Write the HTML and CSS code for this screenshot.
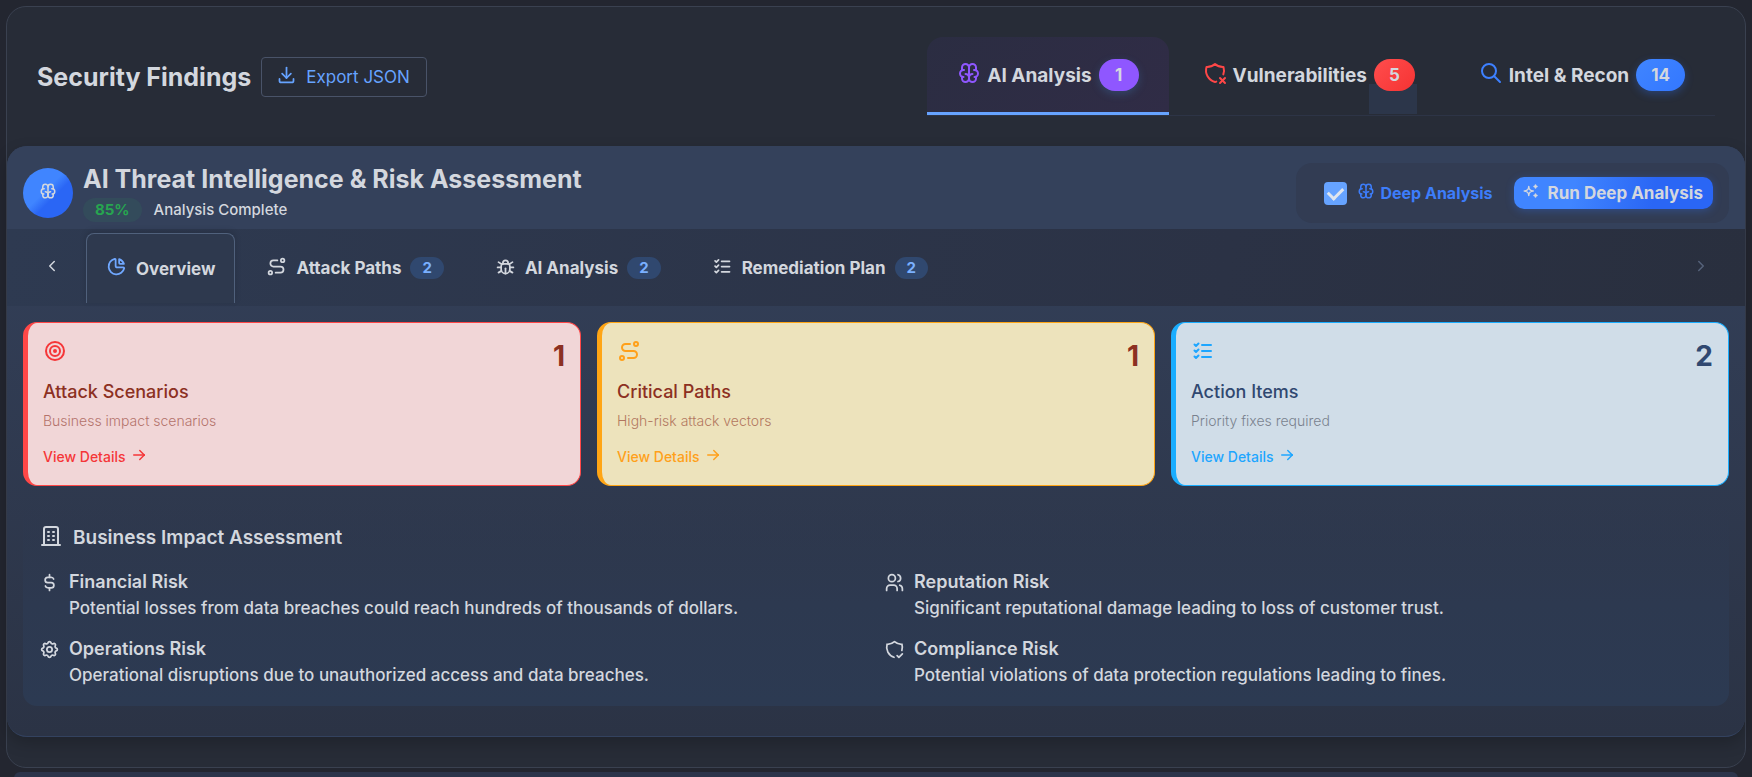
FILE: index.html
```html
<!DOCTYPE html>
<html lang="en">
<head>
    <meta charset="UTF-8">
    <meta name="viewport" content="width=device-width, initial-scale=1.0">
    <title>Security Findings</title>
    <link rel="stylesheet" href="styles.css">
</head>
<body>

<!-- Icon set -->
<svg class="icon-set" aria-hidden="true">
    <symbol id="brain" viewBox="0 0 24 24">
        <path d="M15.5 13a3.5 3.5 0 0 0 -3.5 3.5v1a3.5 3.5 0 0 0 7 0v-1.8"/>
        <path d="M8.5 13a3.5 3.5 0 0 1 3.5 3.5v1a3.5 3.5 0 0 1 -7 0v-1.8"/>
        <path d="M17.5 16a3.5 3.5 0 0 0 0 -7h-.5"/>
        <path d="M19 9.3v-2.8a3.5 3.5 0 0 0 -7 0"/>
        <path d="M6.5 16a3.5 3.5 0 0 1 0 -7h.5"/>
        <path d="M5 9.3v-2.8a3.5 3.5 0 0 1 7 0v10"/>
    </symbol>
    <symbol id="download" viewBox="0 0 24 24">
        <path d="M4 17v2a2 2 0 0 0 2 2h12a2 2 0 0 0 2 -2v-2"/>
        <path d="M7 11l5 5l5 -5"/>
        <path d="M12 4v12"/>
    </symbol>
    <symbol id="shield-x" viewBox="0 0 24 24">
        <path d="M13.252 20.601c-.408 .155 -.826 .288 -1.252 .399a12 12 0 0 1 -8.5 -15a12 12 0 0 0 8.5 -3a12 12 0 0 0 8.5 3a12 12 0 0 1 -.19 7.357"/>
        <path d="M22 22l-5 -5"/>
        <path d="M17 22l5 -5"/>
    </symbol>
    <symbol id="shield-check" viewBox="0 0 24 24">
        <path d="M11.46 20.846a12 12 0 0 1 -7.96 -14.846a12 12 0 0 0 8.5 -3a12 12 0 0 0 8.5 3a12 12 0 0 1 -.09 7.06"/>
        <path d="M15 19l2 2l4 -4"/>
    </symbol>
    <symbol id="search" viewBox="0 0 24 24">
        <circle cx="10" cy="10" r="7"/>
        <path d="M21 21l-6 -6"/>
    </symbol>
    <symbol id="sparkles" viewBox="0 0 24 24">
        <path d="M16 18a2 2 0 0 1 2 2a2 2 0 0 1 2 -2a2 2 0 0 1 -2 -2a2 2 0 0 1 -2 2z"/>
        <path d="M16 6a2 2 0 0 1 2 2a2 2 0 0 1 2 -2a2 2 0 0 1 -2 -2a2 2 0 0 1 -2 2z"/>
        <path d="M9 18a6 6 0 0 1 6 -6a6 6 0 0 1 -6 -6a6 6 0 0 1 -6 6a6 6 0 0 1 6 6z"/>
    </symbol>
    <symbol id="chevron-left" viewBox="0 0 24 24">
        <path d="M15 6l-6 6l6 6"/>
    </symbol>
    <symbol id="chevron-right" viewBox="0 0 24 24">
        <path d="M9 6l6 6l-6 6"/>
    </symbol>
    <symbol id="chart-pie" viewBox="0 0 24 24">
        <path d="M10 3.2a9 9 0 1 0 10.8 10.8a1 1 0 0 0 -1 -1h-6.8a2 2 0 0 1 -2 -2v-7a.9 .9 0 0 0 -1 -.8"/>
        <path d="M15 3.5a9 9 0 0 1 5.5 5.5h-4.5a1 1 0 0 1 -1 -1v-4.5"/>
    </symbol>
    <symbol id="route" viewBox="0 0 24 24">
        <circle cx="5" cy="19" r="2"/>
        <circle cx="19" cy="5" r="2"/>
        <path d="M11 19h5.5a3.5 3.5 0 0 0 0 -7h-8a3.5 3.5 0 0 1 0 -7h4.5"/>
    </symbol>
    <symbol id="bug" viewBox="0 0 24 24">
        <path d="M9 9v-1a3 3 0 0 1 6 0v1"/>
        <path d="M8 9h8a6 6 0 0 1 1 3v3a5 5 0 0 1 -10 0v-3a6 6 0 0 1 1 -3"/>
        <path d="M3 13h4"/>
        <path d="M17 13h4"/>
        <path d="M12 20v-6"/>
        <path d="M4 19l3.35 -2"/>
        <path d="M20 19l-3.35 -2"/>
        <path d="M4 7l3.75 2.4"/>
        <path d="M20 7l-3.75 2.4"/>
    </symbol>
    <symbol id="list-check" viewBox="0 0 24 24">
        <path d="M3.5 5.5l1.5 1.5l2.5 -2.5"/>
        <path d="M3.5 11.5l1.5 1.5l2.5 -2.5"/>
        <path d="M3.5 17.5l1.5 1.5l2.5 -2.5"/>
        <path d="M11 6h9"/>
        <path d="M11 12h9"/>
        <path d="M11 18h9"/>
    </symbol>
    <symbol id="target" viewBox="0 0 24 24">
        <circle cx="12" cy="12" r="1"/>
        <circle cx="12" cy="12" r="5"/>
        <circle cx="12" cy="12" r="9"/>
    </symbol>
    <symbol id="arrow-right" viewBox="0 0 24 24">
        <path d="M5 12h14"/>
        <path d="M13 18l6 -6"/>
        <path d="M13 6l6 6"/>
    </symbol>
    <symbol id="building" viewBox="0 0 24 24">
        <path d="M3 21h18"/>
        <path d="M5 21v-16a2 2 0 0 1 2 -2h10a2 2 0 0 1 2 2v16"/>
        <path d="M9 8h1"/>
        <path d="M9 12h1"/>
        <path d="M9 16h1"/>
        <path d="M14 8h1"/>
        <path d="M14 12h1"/>
        <path d="M14 16h1"/>
    </symbol>
    <symbol id="dollar" viewBox="0 0 24 24">
        <path d="M16.7 8a3 3 0 0 0 -2.7 -2h-4a3 3 0 0 0 0 6h4a3 3 0 0 1 0 6h-4a3 3 0 0 1 -2.7 -2"/>
        <path d="M12 3v3m0 12v3"/>
    </symbol>
    <symbol id="users" viewBox="0 0 24 24">
        <circle cx="9" cy="7" r="4"/>
        <path d="M3 21v-2a4 4 0 0 1 4 -4h4a4 4 0 0 1 4 4v2"/>
        <path d="M16 3.13a4 4 0 0 1 0 7.75"/>
        <path d="M21 21v-2a4 4 0 0 0 -3 -3.85"/>
    </symbol>
    <symbol id="settings" viewBox="0 0 24 24">
        <path d="M10.325 4.317c.426 -1.756 2.924 -1.756 3.35 0a1.724 1.724 0 0 0 2.573 1.066c1.543 -.94 3.31 .826 2.37 2.37a1.724 1.724 0 0 0 1.065 2.572c1.756 .426 1.756 2.924 0 3.35a1.724 1.724 0 0 0 -1.066 2.573c.94 1.543 -.826 3.31 -2.37 2.37a1.724 1.724 0 0 0 -2.572 1.065c-.426 1.756 -2.924 1.756 -3.35 0a1.724 1.724 0 0 0 -2.573 -1.066c-1.543 .94 -3.31 -.826 -2.37 -2.37a1.724 1.724 0 0 0 -1.065 -2.572c-1.756 -.426 -1.756 -2.924 0 -3.35a1.724 1.724 0 0 0 1.066 -2.573c-.94 -1.543 .826 -3.31 2.37 -2.37c1 .608 2.296 .07 2.572 -1.065z"/>
        <circle cx="12" cy="12" r="3"/>
    </symbol>
</svg>

<section class="findings">
    <!-- Page header -->
    <header class="findings-header">
        <div class="findings-title">
            <h1>Security Findings</h1>
            <button class="export-button" type="button">
                <svg class="icon icon-md"><use href="#download"/></svg>
                Export JSON
            </button>
        </div>
        <nav class="main-tabs">
            <button class="main-tab active" type="button">
                <svg class="icon icon-lg purple"><use href="#brain"/></svg>
                AI Analysis <span class="count count-purple">1</span>
            </button>
            <button class="main-tab" type="button">
                <svg class="icon icon-lg red"><use href="#shield-x"/></svg>
                Vulnerabilities <span class="count count-red">5</span>
            </button>
            <button class="main-tab" type="button">
                <svg class="icon icon-lg blue"><use href="#search"/></svg>
                Intel &amp; Recon <span class="count count-blue">14</span>
            </button>
        </nav>
    </header>

    <!-- AI analysis panel -->
    <div class="panel">
        <div class="panel-header">
            <div class="panel-logo"><svg class="icon"><use href="#brain"/></svg></div>
            <div class="panel-heading">
                <h2>AI Threat Intelligence &amp; Risk Assessment</h2>
                <div class="panel-status">
                    <span class="score">85%</span>
                    <span>Analysis Complete</span>
                </div>
            </div>
            <div class="panel-actions">
                <label class="deep-toggle" for="deepAnalysis">
                    <input type="checkbox" id="deepAnalysis" checked>
                    <svg class="icon"><use href="#brain"/></svg>
                    Deep Analysis
                </label>
                <button class="run-button" type="button">
                    <svg class="icon"><use href="#sparkles"/></svg>
                    Run Deep Analysis
                </button>
            </div>
        </div>

        <div class="sub-tabs">
            <button class="scroll-button" type="button" aria-label="Previous tabs">
                <svg class="icon"><use href="#chevron-left"/></svg>
            </button>
            <button class="sub-tab active" type="button">
                <svg class="icon icon-md"><use href="#chart-pie"/></svg>
                Overview
            </button>
            <button class="sub-tab" type="button">
                <svg class="icon icon-md"><use href="#route"/></svg>
                Attack Paths <span class="sub-count">2</span>
            </button>
            <button class="sub-tab" type="button">
                <svg class="icon icon-md"><use href="#bug"/></svg>
                AI Analysis <span class="sub-count">2</span>
            </button>
            <button class="sub-tab" type="button">
                <svg class="icon icon-md"><use href="#list-check"/></svg>
                Remediation Plan <span class="sub-count">2</span>
            </button>
            <button class="scroll-button scroll-next" type="button" aria-label="Next tabs" disabled>
                <svg class="icon"><use href="#chevron-right"/></svg>
            </button>
        </div>

        <div class="panel-body">
            <div class="cards">
                <article class="card card-red">
                    <div class="card-top">
                        <svg class="icon icon-lg"><use href="#target"/></svg>
                        <span class="card-number">1</span>
                    </div>
                    <h3>Attack Scenarios</h3>
                    <p>Business impact scenarios</p>
                    <a href="#scenarios">View Details <svg class="icon"><use href="#arrow-right"/></svg></a>
                </article>
                <article class="card card-orange">
                    <div class="card-top">
                        <svg class="icon icon-lg"><use href="#route"/></svg>
                        <span class="card-number">1</span>
                    </div>
                    <h3>Critical Paths</h3>
                    <p>High-risk attack vectors</p>
                    <a href="#paths">View Details <svg class="icon"><use href="#arrow-right"/></svg></a>
                </article>
                <article class="card card-blue">
                    <div class="card-top">
                        <svg class="icon icon-lg"><use href="#list-check"/></svg>
                        <span class="card-number">2</span>
                    </div>
                    <h3>Action Items</h3>
                    <p>Priority fixes required</p>
                    <a href="#actions">View Details <svg class="icon"><use href="#arrow-right"/></svg></a>
                </article>
            </div>

            <div class="impact">
                <h3><svg class="icon icon-lg"><use href="#building"/></svg> Business Impact Assessment</h3>
                <div class="risks">
                    <div class="risk">
                        <svg class="icon icon-md"><use href="#dollar"/></svg>
                        <div>
                            <h4>Financial Risk</h4>
                            <p>Potential losses from data breaches could reach hundreds of thousands of dollars.</p>
                        </div>
                    </div>
                    <div class="risk">
                        <svg class="icon icon-md"><use href="#users"/></svg>
                        <div>
                            <h4>Reputation Risk</h4>
                            <p>Significant reputational damage leading to loss of customer trust.</p>
                        </div>
                    </div>
                    <div class="risk">
                        <svg class="icon icon-md"><use href="#settings"/></svg>
                        <div>
                            <h4>Operations Risk</h4>
                            <p>Operational disruptions due to unauthorized access and data breaches.</p>
                        </div>
                    </div>
                    <div class="risk">
                        <svg class="icon icon-md"><use href="#shield-check"/></svg>
                        <div>
                            <h4>Compliance Risk</h4>
                            <p>Potential violations of data protection regulations leading to fines.</p>
                        </div>
                    </div>
                </div>
            </div>
        </div>
    </div>
</section>

<!-- Top edge of the next section -->
<div class="next-section"></div>

</body>
</html>
```
FILE: styles.css
```css
* {
    box-sizing: border-box;
}
html {
    background-color: #232630;
}
body {
    margin: 0;
    padding: 6px 6px 0;
    font-family: Inter, "Liberation Sans", sans-serif;
    font-size: 17px;
    line-height: 24px;
    color: #d3d7de;
}
h1, h2, h3, h4, p {
    margin: 0;
}
button {
    font-family: inherit;
    color: inherit;
    background: none;
    border: none;
    padding: 0;
    cursor: pointer;
}
.icon-set {
    display: none;
}
.icon {
    width: 18px;
    height: 18px;
    margin-bottom: 4px;
    flex: none;
    fill: none;
    stroke: currentColor;
    stroke-width: 2;
    stroke-linecap: round;
    stroke-linejoin: round;
}
.icon-md {
    width: 21px;
    height: 21px;
}
.icon-lg {
    width: 24px;
    height: 24px;
}
.purple {
    color: #8f57ff;
}
.red {
    color: #ff4747;
}
.blue {
    color: #3d80ff;
}

/* Header */
.findings {
    border: 1px solid #3a4150;
    border-radius: 20px;
    background-color: #272c37;
    padding-bottom: 30px;
}
.findings-header {
    display: flex;
    justify-content: space-between;
    align-items: center;
    padding: 30px;
}
.findings-title {
    display: flex;
    align-items: center;
    gap: 10px;
}
h1 {
    font-size: 25px;
    line-height: 32px;
    font-weight: 700;
}
.export-button {
    display: flex;
    align-items: center;
    gap: 9px;
    height: 40px;
    padding: 0 16px 0 14px;
    border: 1px solid #495368;
    border-radius: 4px;
    font-size: 17px;
    color: #66a3ff;
}
.main-tabs {
    display: flex;
    gap: 4px;
    border-bottom: 1px solid #2d3446;
}
.main-tab {
    display: flex;
    align-items: center;
    gap: 6px;
    height: 78px;
    padding: 1px 30px 0;
    border-bottom: 3px solid transparent;
    border-radius: 16px 16px 0 0;
    font-size: 19px;
    font-weight: 700;
}
.main-tab.active {
    background: linear-gradient(135deg, #2b2d42, #302c46);
    border-bottom-color: #66a3ff;
}
.count {
    position: relative;
    min-width: 40px;
    padding: 0 15px;
    margin-left: 1px;
    border-radius: 16px;
    font-size: 17px;
    line-height: 32px;
    font-weight: 700;
    text-align: center;
}
.count-purple {
    background-color: #8f57ff;
    box-shadow: 0 3px 8px rgba(64, 128, 192, 0.3);
}
.count-red {
    background: linear-gradient(135deg, #ff4d4d, #f53333);
}
.count-red::after {
    content: "";
    position: absolute;
    z-index: -1;
    left: -5px;
    right: -2px;
    top: 25px;
    height: 30px;
    background-color: #2c364a;
}
.main-tab:has(.count-red) {
    position: relative;
    z-index: 0;
}
.count-blue {
    background: linear-gradient(135deg, #4085ff, #3377ff);
    box-shadow: 0 3px 8px rgba(51, 119, 255, 0.3);
}

/* Panel */
.panel {
    border-bottom: 1px solid #33425f;
    border-radius: 20px;
    background: linear-gradient(#34415b, #2b3345);
    box-shadow: 0 6px 16px rgba(0, 0, 0, 0.2);
    overflow: hidden;
}
.panel-header {
    display: flex;
    align-items: center;
    padding: 17px 16px 6px;
    gap: 10px;
    background-color: #34415b;
}
.panel-logo {
    display: flex;
    align-items: center;
    justify-content: center;
    width: 50px;
    height: 50px;
    border-radius: 50%;
    background: linear-gradient(135deg, #4085ff 45%, #2a66f5 60%);
}
.panel-heading {
    padding-bottom: 1px;
}
h2 {
    font-size: 25px;
    line-height: 32px;
    font-weight: 700;
}
.panel-status {
    display: flex;
    align-items: center;
    gap: 12px;
    margin-top: 3px;
    font-size: 15px;
    font-weight: 500;
}
.score {
    padding: 0 12px;
    border-radius: 12px;
    background-color: #334b5b;
    color: #27a550;
    font-weight: 700;
}
.panel-actions {
    display: flex;
    align-items: center;
    gap: 21px;
    margin-left: auto;
    height: 60px;
    padding: 0 16px 0 28px;
    border-radius: 16px;
    background-color: #323c53;
}
.deep-toggle {
    display: flex;
    align-items: center;
    gap: 5px;
    color: #3d7dfa;
    font-size: 16px;
    font-weight: 700;
}
.deep-toggle input {
    appearance: none;
    width: 23px;
    height: 23px;
    margin: 0 5px 0 0;
    border-radius: 4px;
    background-color: #66a3ff;
    display: grid;
    place-content: center;
}
.deep-toggle input:checked::before {
    content: "";
    width: 12px;
    height: 7px;
    margin-bottom: 3px;
    border: solid #dfe5ee;
    border-width: 0 0 3px 3px;
    transform: rotate(-45deg);
}
.run-button {
    display: flex;
    align-items: center;
    gap: 8px;
    height: 32px;
    padding: 0 10px 0 8px;
    border-radius: 10px;
    background: linear-gradient(100deg, #4085ff 30%, #2a66f5 70%);
    box-shadow: 0 2px 8px rgba(51, 119, 255, 0.3);
    font-size: 17px;
    font-weight: 700;
}

/* Sub tabs */
.sub-tabs {
    display: flex;
    align-items: stretch;
    gap: 11px;
    height: 77px;
    padding: 4px 21px 3px;
    background: linear-gradient(100deg, #2e3a51, #2b3245 70%, #292f3e);
}
.scroll-button {
    width: 47px;
    display: flex;
    align-items: center;
    justify-content: center;
}
.scroll-next {
    margin-left: auto;
    color: #56627a;
}
.sub-tab {
    display: flex;
    align-items: center;
    gap: 9px;
    padding: 0 19px;
    border: 1px solid transparent;
    font-size: 17px;
    font-weight: 700;
}
.sub-tab.active {
    border-color: #50617c;
    border-bottom: none;
    border-radius: 8px 8px 0 0;
    background-color: #2e394e;
    box-shadow: 0 -2px 6px rgba(0, 0, 0, 0.15);
}
.sub-tab.active .icon {
    color: #70a8ff;
}
.sub-count {
    padding: 0 12px;
    border-radius: 11px;
    background-color: #30486f;
    color: #7ab0ff;
    font-size: 15px;
    line-height: 22px;
}

/* Cards */
.panel-body {
    padding: 16px 16px 30px;
}
.cards {
    display: grid;
    grid-template-columns: repeat(3, 1fr);
    gap: 16px;
}
.card {
    padding: 16px 15px;
    border: 1px solid;
    border-left-width: 5px;
    border-radius: 14px;
}
.card-top {
    display: flex;
    justify-content: space-between;
    height: 41px;
}
.card-number {
    font-size: 28px;
    line-height: 34px;
    font-weight: 700;
}
.card h3 {
    font-size: 18px;
    font-weight: 500;
}
.card p {
    margin-top: 5px;
    font-size: 14px;
    font-weight: 300;
    opacity: 0.6;
}
.card a {
    display: flex;
    align-items: center;
    gap: 4px;
    margin-top: 12px;
    font-size: 14px;
    font-weight: 500;
    text-decoration: none;
    color: inherit;
}
.card-red {
    color: #8c3022;
    background-color: #f1d6d7;
    border-color: #ff4747;
}
.card-red .icon, .card-red a {
    color: #f53638;
}
.card-orange {
    color: #8c3022;
    background-color: #ede3bc;
    border-color: #ffa514;
}
.card-orange .icon, .card-orange a {
    color: #ffa01a;
}
.card-blue {
    color: #304870;
    background-color: #d0dde8;
    border-color: #19adff;
}
.card-blue p {
    color: #3f4552;
}
.card-blue .icon, .card-blue a {
    color: #1ea6ff;
}

/* Business impact */
.impact {
    margin-top: 16px;
    padding: 21px 16px 17px;
    border-radius: 14px;
    background: linear-gradient(transparent, #2d3950 50%, #2c3a52);
}
.impact h3 {
    display: flex;
    align-items: center;
    gap: 10px;
    line-height: 30px;
    font-size: 19px;
    font-weight: 600;
}
.risks {
    display: grid;
    grid-template-columns: 1fr 1fr;
    gap: 14px 16px;
    margin-top: 16px;
}
.risk {
    display: flex;
    gap: 9px;
}
.risk .icon {
    margin-top: 3px;
}
.risk h4 {
    font-size: 18px;
    line-height: 26px;
    font-weight: 600;
}
.risk p {
    font-size: 17px;
    line-height: 27px;
    font-weight: 500;
}

.next-section {
    height: 6px;
    margin: 4px 8px 0;
    border-radius: 16px 16px 0 0;
    background-color: #2c354b;
}
```
